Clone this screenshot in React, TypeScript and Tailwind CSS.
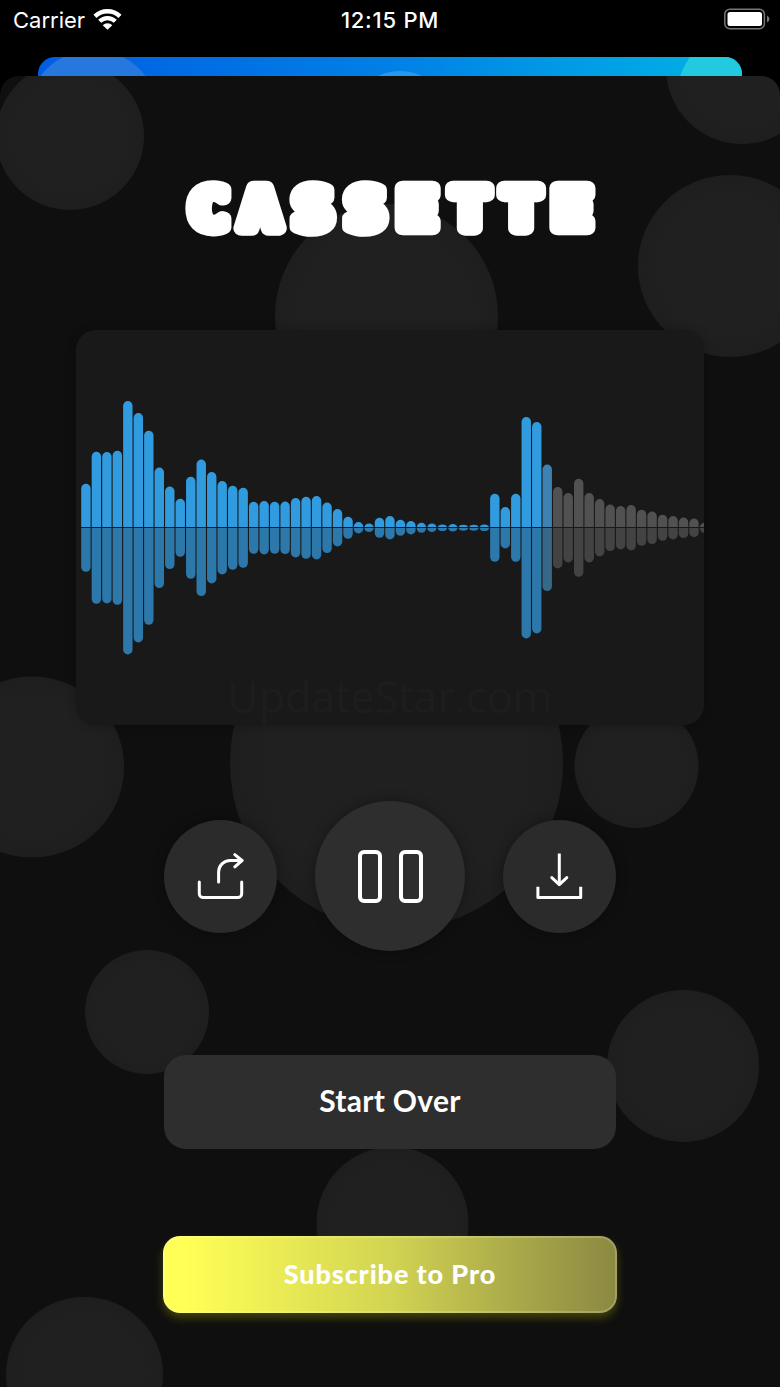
import React from 'react';

// Half height of every bar, measured from the centre line
const levels = [
  44, 76, 75.7, 77, 126.7, 114.7, 97, 60.3, 41.3, 29, 51, 68.3, 55.7, 46.7, 42, 40, 26, 26.7, 26, 26.3,
  29.7, 31, 31.7, 25.3, 18.7, 11, 5.7, 4.3, 10, 11.7, 8, 6.7, 5, 4.3, 3.3, 3.7, 3, 3, 3.3, 34,
  20.7, 34, 110.7, 105.7, 63.3, 40.7, 34.7, 49, 34.7, 28.7, 23.3, 21.7, 22.7, 18, 16.3, 13, 11.7, 10.3, 9.3, 5,
];
const CURRENT = 44;
const STEP = 10.485;

const bubbles = [
  { cx: 70, cy: 60, rx: 74, ry: 74 },
  { cx: 742, cy: -8, rx: 76, ry: 76 },
  { cx: 730, cy: 190, rx: 92, ry: 91 },
  { cx: 386.5, cy: 240, rx: 111.5, ry: 112 },
  { cx: 32, cy: 691, rx: 92, ry: 90.5 },
  { cx: 636.5, cy: 690, rx: 62, ry: 62 },
  { cx: 396.5, cy: 687, rx: 166.5, ry: 167 },
  { cx: 147, cy: 936, rx: 62, ry: 62 },
  { cx: 683, cy: 990, rx: 76, ry: 76 },
  { cx: 392.5, cy: 1147, rx: 76, ry: 76 },
  { cx: 84.5, cy: 1298, rx: 78.5, ry: 77 },
];

const StatusBar: React.FC = () => (
  <div className="flex h-[57px] items-start justify-between pt-[6px] pl-[13px] pr-[10px] font-['Inter',sans-serif] text-[22px] leading-7 text-white">
    <div className="flex w-[160px] items-center gap-[8px]">
      <span>Carrier</span>
      <svg width="29" height="22" viewBox="0 0 29 22" fill="none" stroke="white" strokeWidth="4.4" className="-mt-[3px]">
        <path d="M2 8.4 A17.8 17.8 0 0 1 27 8.4" />
        <path d="M6.7 13.3 A11.1 11.1 0 0 1 22.3 13.3" />
        <path d="M14.5 21.7 L9.7 17.2 A6.7 6.7 0 0 1 19.3 17.2 Z" fill="white" stroke="none" />
      </svg>
    </div>
    <span className="-ml-[3px] font-medium tracking-[0.75px]">12:15 PM</span>
    <div className="flex w-[160px] justify-end pt-[2px]">
      <svg width="46" height="22" viewBox="0 0 46 22">
        <rect x="0.8" y="1.2" width="39.6" height="19.6" rx="5" fill="none" stroke="#777" strokeWidth="1.5" />
        <rect x="3.5" y="4" width="34.5" height="14" rx="2.5" fill="white" />
        <path d="M43 7.5 Q45.5 9 45.5 11 Q45.5 13 43 14.5 Z" fill="#777" />
      </svg>
    </div>
  </div>
);

const Background: React.FC = () => (
  <svg className="absolute inset-0 -z-10" width="780" height="1311" viewBox="0 0 780 1311">
    <defs>
      <radialGradient id="bubble">
        <stop offset="0.75" stopColor="#202020" />
        <stop offset="1" stopColor="#1e1e1e" />
      </radialGradient>
    </defs>
    {bubbles.map((b, i) => (
      <ellipse key={i} {...b} fill="url(#bubble)" />
    ))}
  </svg>
);

const Logo: React.FC = () => (
  <svg width="416" height="58" viewBox="0 0 416 58" className="overflow-visible">
    <text
      transform="translate(0 48.6) scale(1.16 1)"
      x="6.1 50.7 96.3 141.7 186 231.4 275.6 319.4"
      fontSize="55.5"
      className="font-['DejaVu_Sans_Mono',monospace] font-bold"
      fill="white"
      stroke="white"
      strokeWidth="14.5"
      strokeLinejoin="round"
    >
      CASSETTE
    </text>
  </svg>
);

const Waveform: React.FC = () => (
  <svg width="628" height="395" viewBox="0 0 628 395" className="absolute inset-0">
    <defs>
      <clipPath id="upper">
        <rect width="628" height="197" />
      </clipPath>
      <clipPath id="lower">
        <rect y="198" width="628" height="197" />
      </clipPath>
    </defs>
    {['upper', 'lower'].map((side) => (
      <g key={side} clipPath={`url(#${side})`}>
        {levels.map((h, i) => {
          const up = side === 'upper';
          let fill = up ? '#319bdf' : '#2c78aa';
          if (i === CURRENT) fill = up ? '#3d82b1' : '#356889';
          if (i > CURRENT) fill = up ? '#515151' : '#434343';
          return (
            <rect
              key={i}
              x={5.2 + i * STEP}
              y={197.8 - h}
              width="9.4"
              height={h * 2}
              rx="4.7"
              ry={Math.min(4.7, h)}
              fill={fill}
            />
          );
        })}
      </g>
    ))}
  </svg>
);

const App: React.FC = () => {
  return (
    <div className="h-[1387px] w-[780px] overflow-hidden bg-black">
      <StatusBar />

      {/* Edge of the screen behind the sheet */}
      <div className="mx-[38px] h-[19px] overflow-hidden rounded-t-[17px] bg-linear-to-r from-[#005de2] via-[#0080e6] to-[#00b4e4]">
        <svg width="704" height="19" viewBox="38 57 704 19">
          <circle cx="93" cy="116" r="66" fill="#2678df" />
          <circle cx="400" cy="123" r="52" fill="#2898eb" />
          <circle cx="745" cy="97" r="68" fill="#22cadf" />
        </svg>
      </div>

      <main className="relative isolate flex h-[1311px] flex-col items-center overflow-hidden rounded-t-[19px] bg-[#0f0f0f] pt-[103px] font-['Lato',sans-serif] text-white">
        <Background />
        <Logo />

        <section className="relative mt-[93px] flex h-[395px] w-[628px] items-end justify-center overflow-hidden rounded-[20px] bg-[#191919] shadow-[0_0_10px_rgba(0,0,0,0.25)]">
          <Waveform />
          <span className="mb-[1px] font-['Open_Sans',sans-serif] text-[43px] leading-[54px] text-[#1d1d1d]">
            UpdateStar.com
          </span>
        </section>

        <div className="mt-[76px] flex items-center gap-[38px]">
          <button aria-label="Share" className="flex size-[113px] items-center justify-center rounded-full bg-[#2b2b2b] shadow-[0_0_12px_rgba(0,0,0,0.35)]">
            <svg width="113" height="113" viewBox="0 0 113 113" fill="none" stroke="white" strokeWidth="3" strokeLinecap="round" strokeLinejoin="round">
              <path d="M35.3 62v11.5a4 4 0 0 0 4 4h34.4a4 4 0 0 0 4-4V62" />
              <path d="M54.6 62V52a11.5 11.5 0 0 1 11.5-11.5H78" />
              <path d="M70.8 34.7l7.2 5.8-7.2 6.3" />
            </svg>
          </button>
          <button aria-label="Pause" className="flex size-[150px] items-center justify-center gap-[17px] rounded-full bg-[#2e2e2e] shadow-[0_0_12px_rgba(0,0,0,0.35)]">
            <span className="h-[53px] w-[24px] rounded-[6px] border-4 border-white" />
            <span className="h-[53px] w-[24px] rounded-[6px] border-4 border-white" />
          </button>
          <button aria-label="Download" className="flex size-[113px] items-center justify-center rounded-full bg-[#2b2b2b] shadow-[0_0_12px_rgba(0,0,0,0.35)]">
            <svg width="113" height="113" viewBox="0 0 113 113" fill="none" stroke="white" strokeWidth="3" strokeLinejoin="round">
              <path d="M34.9 66.7v10.8h42.8V66.7" />
              <path d="M56.3 33.5V64" />
              <path d="M48.8 57.6l7.5 7 7.5-7" strokeLinecap="round" />
            </svg>
          </button>
        </div>

        <button className="mt-[104px] h-[94px] w-[452px] rounded-[22px] bg-[#2e2e2e] pb-[3px] text-[30px] font-bold tracking-[0.3px]">
          Start Over
        </button>

        <button className="mt-[87px] h-[77px] w-[454px] rounded-[17px] border-2 border-white/20 bg-linear-to-r from-[#ffff56] from-5% via-[#d2d452] to-[#8b8842] bg-origin-border text-[27px] font-black tracking-[0.9px] shadow-[0_5px_8px_rgba(190,190,0,0.3)]">
          Subscribe to Pro
        </button>
      </main>
    </div>
  );
};

export default App;
